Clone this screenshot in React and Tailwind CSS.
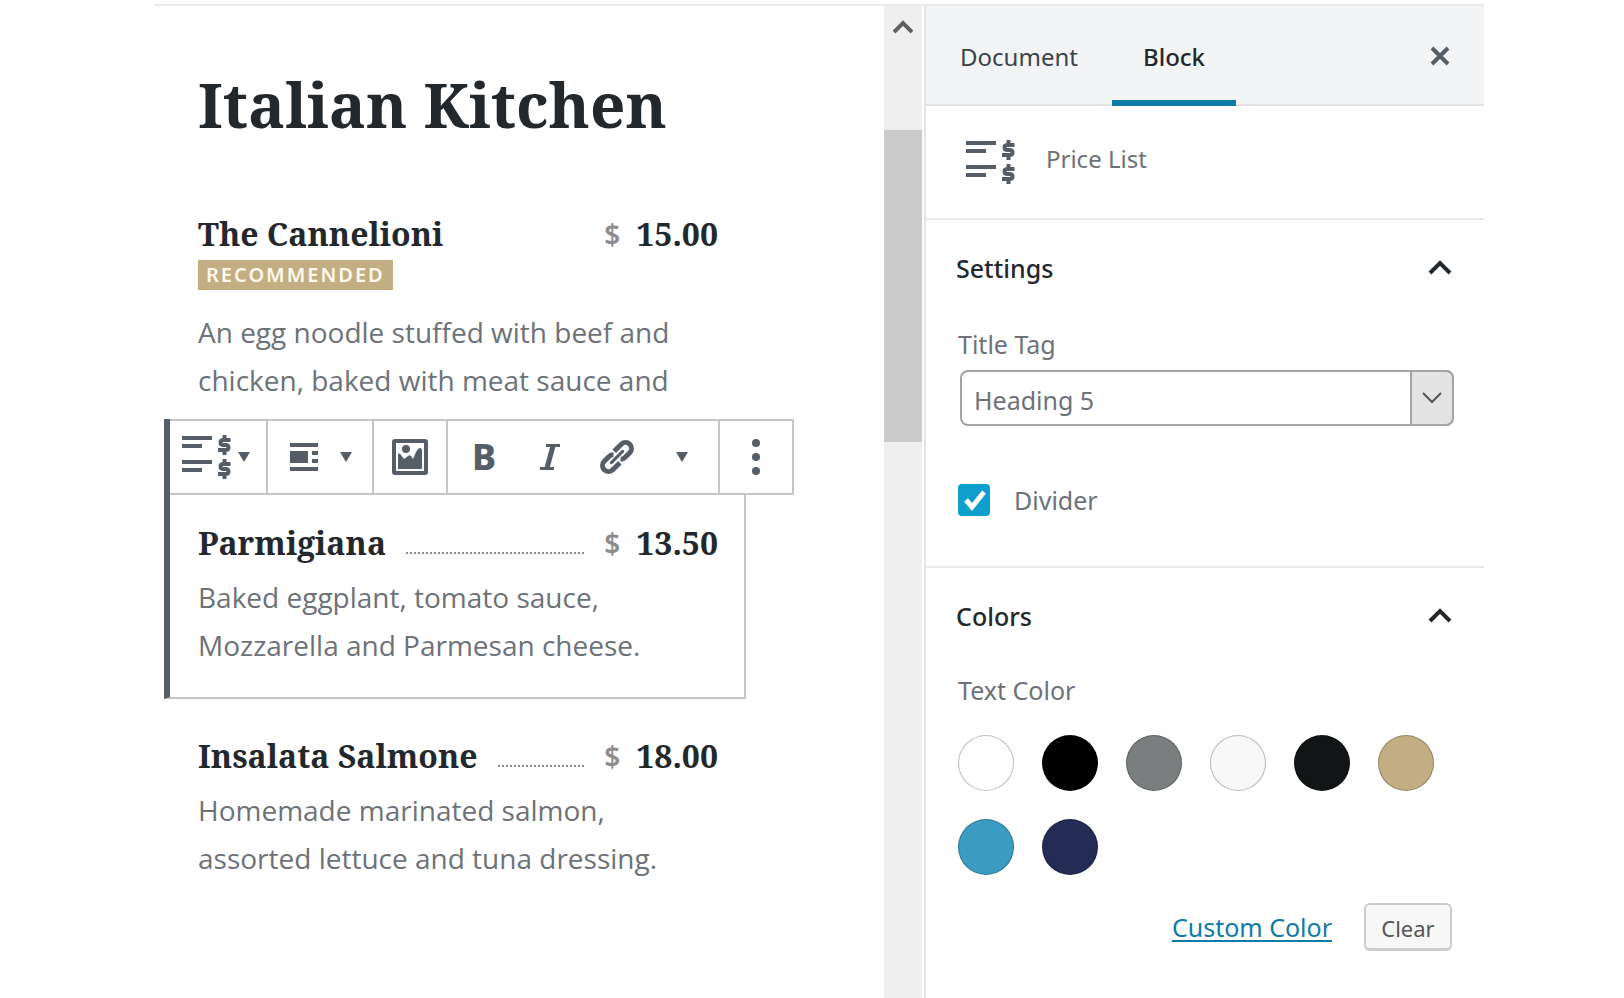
import { useState } from "react";
import clsx from "clsx";

const menuItems = [
  {
    title: "The Cannelioni",
    price: "15.00",
    badge: "Recommended",
    lines: ["An egg noodle stuffed with beef and", "chicken, baked with meat sauce and"],
  },
  {
    title: "Parmigiana",
    price: "13.50",
    divider: true,
    selected: true,
    lines: ["Baked eggplant, tomato sauce,", "Mozzarella and Parmesan cheese."],
  },
  {
    title: "Insalata Salmone",
    price: "18.00",
    divider: true,
    lines: ["Homemade marinated salmon,", "assorted lettuce and tuna dressing."],
  },
];

const swatches = [
  { name: "White", color: "bg-white" },
  { name: "Black", color: "bg-black" },
  { name: "Gray", color: "bg-[#7a7e7e]" },
  { name: "Light gray", color: "bg-[#f8f8f8]" },
  { name: "Charcoal", color: "bg-[#121516]" },
  { name: "Sand", color: "bg-[#c2ae82]" },
  { name: "Blue", color: "bg-[#3c9bc0]" },
  { name: "Navy", color: "bg-[#242c56]" },
];

function PriceListIcon() {
  return (
    <svg width="50" height="44" viewBox="0 0 50 44" fill="none" aria-hidden="true">
      <path
        d="M0 3h30M0 11h20M0 27h30M0 35h20"
        stroke="currentColor"
        strokeWidth="4"
      />
      {[0, 24].map((y) => (
        <path
          key={y}
          d={`M42.500 ${y}v4M42.500 ${y + 16}v4M48.500 ${y + 5}H41.500q-3 0-3 2.500t3 2.500h2q3 0 3 2.500t-3 2.500H36`}
          stroke="currentColor"
          strokeWidth="4"
        />
      ))}
    </svg>
  );
}

function Caret() {
  return (
    <svg width="12" height="10" viewBox="0 0 12 10" fill="currentColor" aria-hidden="true">
      <path d="M0 0h12L6 10z" />
    </svg>
  );
}

function AlignIcon() {
  return (
    <svg width="28" height="28" viewBox="0 0 28 28" fill="currentColor" aria-hidden="true">
      <path d="M0 0h28v4H0zM0 8h18v12H0zM22 8h6v4h-6zM22 16h6v4h-6zM0 24h28v4H0z" />
    </svg>
  );
}

function ImageIcon() {
  return (
    <svg width="36" height="36" viewBox="0 0 36 36" aria-hidden="true">
      <rect x="2" y="2" width="32" height="32" rx="1" fill="none" stroke="currentColor" strokeWidth="4" />
      <circle cx="14" cy="10" r="4" fill="currentColor" />
      <path
        d="M6 30V16c0-2 2-2 3 0l3 4 4-3c1-1 2-1 3 0l2 3 3-7c1-2 3-4 4-4s2 1 2 3v18z"
        fill="currentColor"
      />
    </svg>
  );
}

function ItalicIcon() {
  return (
    <svg width="22" height="26" viewBox="0 0 22 26" fill="none" aria-hidden="true">
      <path d="M7 1.500h14M1 24.500h14" stroke="currentColor" strokeWidth="3" />
      <path d="M14 2 8 24" stroke="currentColor" strokeWidth="5" />
    </svg>
  );
}

function LinkIcon() {
  return (
    <svg width="36" height="36" viewBox="-18 -18 36 36" fill="none" aria-hidden="true">
      <g transform="rotate(-45)" stroke="currentColor" strokeWidth="5">
        <path d="M-2 6H-12a6 6 0 0 1 0-12H-6a6 6 0 0 1 5 2" />
        <path d="M2-6H12a6 6 0 0 1 0 12H6a6 6 0 0 1-5-2" />
        <path d="M-8 0H8" strokeWidth="3" strokeLinecap="round" />
      </g>
    </svg>
  );
}

function Chevron() {
  return (
    <svg width="24" height="15" viewBox="0 0 24 15" fill="none" aria-hidden="true">
      <path d="M2 13 12 3l10 10" stroke="currentColor" strokeWidth="4" />
    </svg>
  );
}

function BlockToolbar() {
  return (
    <div
      role="toolbar"
      aria-label="Block tools"
      className="flex h-[76px] w-max divide-x-2 divide-[#c3c5c8] border-2 border-l-0 border-[#c3c5c8] bg-white text-[#555d66]"
    >
      <button type="button" aria-label="Change block type" className="flex w-[98px] items-center gap-1.5 pl-3">
        <PriceListIcon />
        <Caret />
      </button>
      <button type="button" aria-label="Change alignment" className="flex w-[106px] items-center justify-center gap-[22px] pl-0.5">
        <AlignIcon />
        <Caret />
      </button>
      <button type="button" aria-label="Edit image" className="flex w-[74px] items-center justify-center">
        <ImageIcon />
      </button>
      <div className="flex w-[272px] items-center">
        <button type="button" aria-label="Bold" className="w-[72px] text-4xl font-extrabold">
          B
        </button>
        <button type="button" aria-label="Italic" className="flex w-[60px] justify-center">
          <ItalicIcon />
        </button>
        <button type="button" aria-label="Link" className="flex w-[74px] justify-center">
          <LinkIcon />
        </button>
        <button type="button" aria-label="More rich text controls" className="flex w-14 justify-center">
          <Caret />
        </button>
      </div>
      <button type="button" aria-label="More options" className="flex w-[72px] items-center justify-center">
        <svg width="8" height="36" viewBox="0 0 8 36" fill="currentColor" aria-hidden="true">
          <circle cx="4" cy="4" r="4" />
          <circle cx="4" cy="18" r="4" />
          <circle cx="4" cy="32" r="4" />
        </svg>
      </button>
    </div>
  );
}

function MenuItem({ item }) {
  return (
    <article
      className={clsx(
        "border-l-[6px]",
        item.selected
          ? "mb-[18px] h-[280px] border-r-2 border-b-2 border-r-[#c3c5c8] border-b-[#c3c5c8] border-l-[#555d66]"
          : "border-transparent"
      )}
    >
      {item.selected && <BlockToolbar />}
      <div className={clsx("pl-7", item.selected ? "pt-6 pr-[26px]" : "pr-7")}>
        <div className="flex h-12 items-center font-['Noto_Serif','DejaVu_Serif',serif] text-[32px] font-bold text-[#23282d]">
          <h5 className="whitespace-nowrap">{item.title}</h5>
          <span
            className={clsx(
              "mx-5 mt-5 flex-1",
              item.divider && "border-b-2 border-dotted border-[#8c8c8c]"
            )}
          />
          <span className="mr-4 font-['Noto_Sans',sans-serif] text-[28px] font-semibold text-[#8c8c8c]">$</span>
          <span>{item.price}</span>
        </div>
        {item.badge && (
          <span className="mt-0.5 mb-3 block h-[30px] w-max bg-[#c2ae82] px-2 text-xl leading-[30px] font-semibold tracking-widest text-[#fdf9ee] uppercase">
            {item.badge}
          </span>
        )}
        <p className="pt-1.5 font-['Open_Sans',sans-serif] text-[28px] leading-[48px] text-[#6d7278]">
          {item.lines.map((line) => (
            <span key={line} className="block whitespace-nowrap">
              {line}
            </span>
          ))}
        </p>
      </div>
    </article>
  );
}

function PanelTitle({ children }) {
  return (
    <h2>
      <button type="button" aria-expanded="true" className="flex h-[100px] w-full items-center justify-between pr-8 pb-0.5 pl-[30px] text-[25px] font-medium text-[#23282d]">
        {children}
        <span className="pb-1">
          <Chevron />
        </span>
      </button>
    </h2>
  );
}

export default function App() {
  const [divider, setDivider] = useState(true);

  return (
    <div className="min-h-screen bg-white pt-1 pr-[140px] pl-[154px] font-['Noto_Sans',sans-serif]">
      <div className="flex min-h-[calc(100vh-4px)] border-t-2 border-[#e9e9e9]">
        <main className="min-w-0 flex-1 pl-2.5">
          <div className="max-w-[582px]">
            <h1 className="pt-[54px] pb-[42px] pl-[34px] font-['Noto_Serif','DejaVu_Serif',serif] text-[62px] leading-[88px] font-bold whitespace-nowrap text-[#23282d]">
              Italian Kitchen
            </h1>
            <section className="flex flex-col gap-[15px] pt-5">
              {menuItems.map((item) => (
                <MenuItem key={item.title} item={item} />
              ))}
            </section>
          </div>
        </main>

        <div className="w-[38px] shrink-0 bg-[#efefef]" aria-hidden="true">
          <div className="flex h-[124px] justify-center pt-[13px] text-[#606060]">
            <svg width="20" height="15" viewBox="0 0 20 15" fill="none">
              <path d="m1 13 9-9 9 9" stroke="currentColor" strokeWidth="4" />
            </svg>
          </div>
          <div className="h-[312px] bg-[#cacaca]" />
        </div>

        <aside className="ml-0.5 w-[560px] shrink-0 border-l-2 border-[#e2e4e7] text-[25px] text-[#6c7278]">
          <div className="flex h-[100px] items-stretch border-b-2 border-[#e2e4e7] bg-[#f3f4f5] pr-[34px] text-2xl text-[#3c434a]">
            <button type="button" className="w-[186px] pt-1">
              Document
            </button>
            <button type="button" className="-mb-0.5 w-[124px] border-b-[6px] border-[#0f7ba7] pt-2 font-medium text-[#23282d]">
              Block
            </button>
            <button type="button" aria-label="Close settings" className="ml-auto pt-0.5 text-[#555d66]">
              <svg width="20" height="20" viewBox="0 0 20 20" fill="none" aria-hidden="true">
                <path d="m2 2 16 16M18 2 2 18" stroke="currentColor" strokeWidth="4" />
              </svg>
            </button>
          </div>

          <div className="flex h-[114px] items-center gap-[30px] border-b-2 border-[#e9e9e9] pl-10 text-2xl">
            <span className="text-[#555d66]">
              <PriceListIcon />
            </span>
            <span className="pb-1.5">Price List</span>
          </div>

          <section className="border-b-2 border-[#e9e9e9] pb-[50px]">
            <PanelTitle>Settings</PanelTitle>
            <div className="pr-[30px] pl-8">
              <label htmlFor="title-tag" className="block h-[50px] pt-1.5 leading-[36px]">
                Title Tag
              </label>
              <div className="relative ml-0.5">
                <select
                  id="title-tag"
                  className="block h-14 w-full appearance-none rounded-lg border-2 border-[#a2a4a8] bg-white pt-1.5 pl-3"
                >
                  <option>Heading 5</option>
                </select>
                <span className="pointer-events-none absolute inset-y-0 right-0 flex w-11 items-center justify-center rounded-r-lg border-2 border-[#a2a4a8] bg-[#e3e3e3] text-[#555555]">
                  <svg width="20" height="12" viewBox="0 0 20 12" fill="none" aria-hidden="true">
                    <path d="m1 1 9 9 9-9" stroke="currentColor" strokeWidth="2" />
                  </svg>
                </span>
              </div>
              <div className="mt-[58px] flex h-8 items-center">
                <span className="relative flex">
                  <input
                    id="divider"
                    type="checkbox"
                    checked={divider}
                    onChange={(e) => setDivider(e.target.checked)}
                    className="size-8 appearance-none rounded border-2 border-[#0f9fce] checked:bg-[#0f9fce]"
                  />
                  {divider && (
                    <svg
                      className="pointer-events-none absolute inset-0 text-white"
                      width="32"
                      height="32"
                      viewBox="0 0 32 32"
                      fill="none"
                      aria-hidden="true"
                    >
                      <path d="m8 16 6 7L26 8" stroke="currentColor" strokeWidth="5" />
                    </svg>
                  )}
                </span>
                <label htmlFor="divider" className="pt-0.5 pl-6">
                  Divider
                </label>
              </div>
            </div>
          </section>

          <section>
            <PanelTitle>Colors</PanelTitle>
            <div className="pr-8 pl-8">
              <p className="h-[67px] pt-1 leading-[36px]">Text Color</p>
              <div className="grid grid-cols-[repeat(6,56px)] gap-7">
                {swatches.map((swatch) => (
                  <button
                    key={swatch.name}
                    type="button"
                    aria-label={swatch.name}
                    className={clsx("size-14 rounded-full border border-black/25", swatch.color)}
                  />
                ))}
              </div>
              <div className="mt-7 flex items-center justify-end gap-8">
                <a href="#custom-color" className="pt-0.5 text-[#0f7ba7] underline decoration-2 underline-offset-3">
                  Custom Color
                </a>
                <button
                  type="button"
                  className="h-12 w-[88px] rounded-md border-2 border-b-[3px] border-[#cccccc] bg-[#f7f7f7] pt-1 text-[22px] text-[#555555]"
                >
                  Clear
                </button>
              </div>
            </div>
          </section>
        </aside>
      </div>
    </div>
  );
}
